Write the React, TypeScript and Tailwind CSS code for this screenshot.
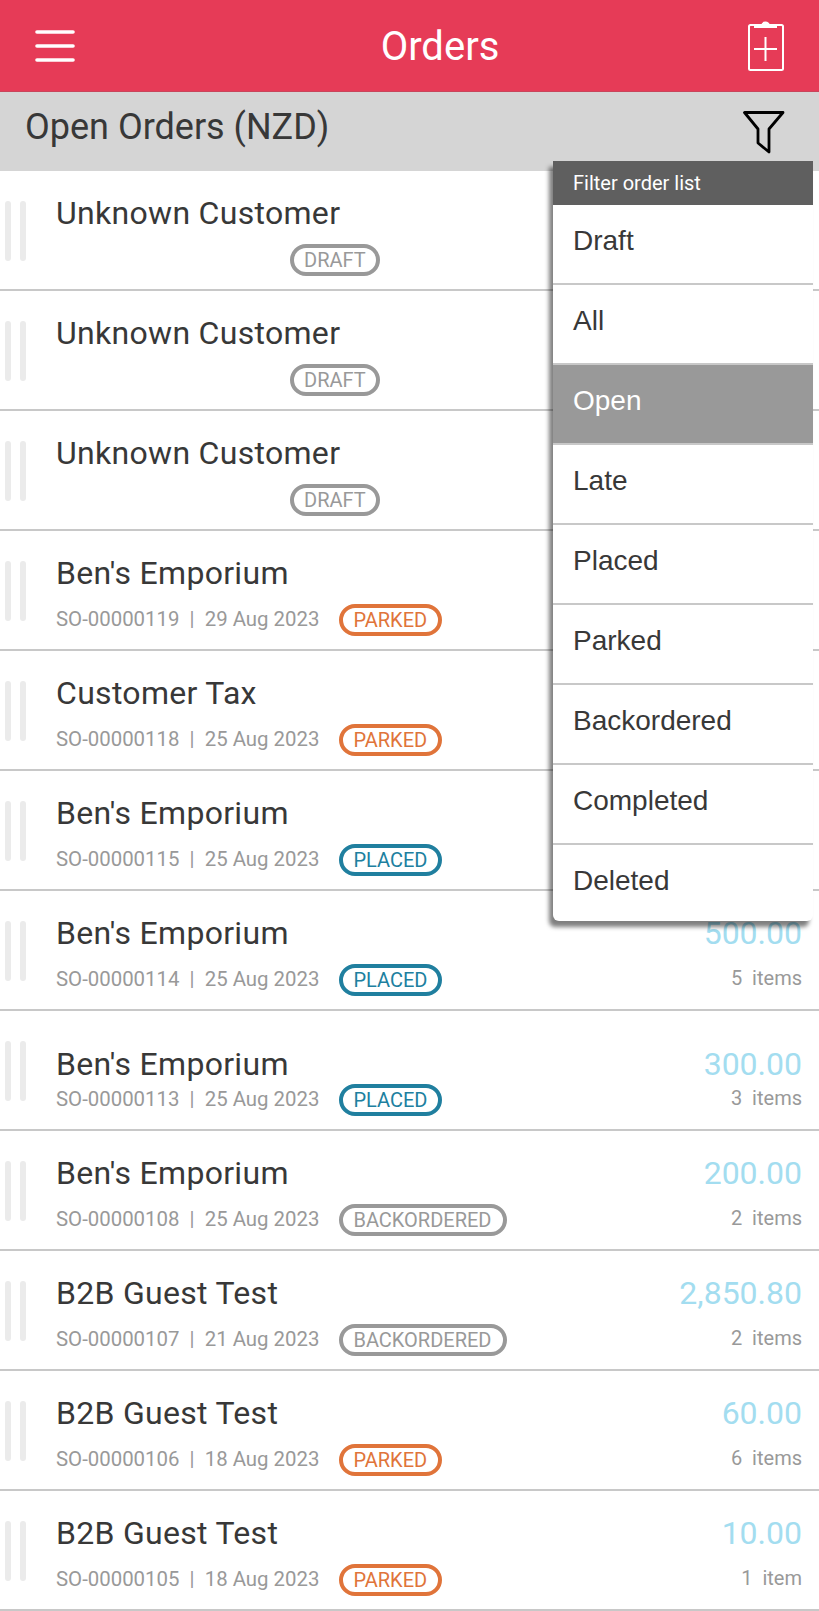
const FONT = "font-['Roboto',sans-serif]";

type Status = "DRAFT" | "PARKED" | "PLACED" | "BACKORDERED";

type Order = {
  name: string;
  so?: string;
  date?: string;
  status: Status;
  amount?: string;
  items?: string;
  shifted?: boolean;
};

const orders: Order[] = [
  { name: "Unknown Customer", status: "DRAFT" },
  { name: "Unknown Customer", status: "DRAFT" },
  { name: "Unknown Customer", status: "DRAFT" },
  { name: "Ben's Emporium", so: "SO-00000119", date: "29 Aug 2023", status: "PARKED" },
  { name: "Customer Tax", so: "SO-00000118", date: "25 Aug 2023", status: "PARKED" },
  { name: "Ben's Emporium", so: "SO-00000115", date: "25 Aug 2023", status: "PLACED" },
  { name: "Ben's Emporium", so: "SO-00000114", date: "25 Aug 2023", status: "PLACED", amount: "500.00", items: "5\u00a0\u00a0items" },
  { name: "Ben's Emporium", so: "SO-00000113", date: "25 Aug 2023", status: "PLACED", amount: "300.00", items: "3\u00a0\u00a0items", shifted: true },
  { name: "Ben's Emporium", so: "SO-00000108", date: "25 Aug 2023", status: "BACKORDERED", amount: "200.00", items: "2\u00a0\u00a0items" },
  { name: "B2B Guest Test", so: "SO-00000107", date: "21 Aug 2023", status: "BACKORDERED", amount: "2,850.80", items: "2\u00a0\u00a0items" },
  { name: "B2B Guest Test", so: "SO-00000106", date: "18 Aug 2023", status: "PARKED", amount: "60.00", items: "6\u00a0\u00a0items" },
  { name: "B2B Guest Test", so: "SO-00000105", date: "18 Aug 2023", status: "PARKED", amount: "10.00", items: "1\u00a0\u00a0item" },
];

const filters = ["Draft", "All", "Open", "Late", "Placed", "Parked", "Backordered", "Completed", "Deleted"];

const badgeStyles: Record<Status, string> = {
  DRAFT: "border-[#999999] text-[#999999] pr-[10px]",
  BACKORDERED: "border-[#999999] text-[#999999] pr-[11px]",
  PARKED: "border-[#E0743A] text-[#E0743A] pr-[11px]",
  PLACED: "border-[#207F9F] text-[#207F9F] pr-[11px]",
};

function Badge({ status, className = "" }: { status: Status; className?: string }) {
  return (
    <span
      className={`flex h-[32px] items-center rounded-full border-[4px] pl-[10px] text-[20px] leading-none ${badgeStyles[status]} ${className}`}
    >
      {status}
    </span>
  );
}

function OrderRow({ order }: { order: Order }) {
  return (
    <div className="flex h-[120px] border-b-2 border-[#C8C8C8] bg-white">
      <div className="flex w-[56px] shrink-0 gap-[9px] pl-[5px] pt-[30px]">
        <div className="h-[60px] w-[6px] rounded-full bg-[#EBEBEB]" />
        <div className="h-[60px] w-[6px] rounded-full bg-[#EBEBEB]" />
      </div>
      <div className={`flex-1 ${order.shifted ? "pt-[35px]" : "pt-[24px]"}`}>
        <div className="h-[36px] text-[32px] leading-[36px] tracking-[0.3px] text-[#383838]">{order.name}</div>
        <div className={`flex h-[32px] items-center ${order.shifted ? "mt-[2px]" : "mt-[13px]"}`}>
          {order.so ? (
            <>
              <span className="-mt-[2px] text-[20.4px] leading-none text-[#999999]">
                {order.so}
                {"\u00a0\u00a0|\u00a0\u00a0"}
                {order.date}
              </span>
              <Badge status={order.status} className="ml-[20px]" />
            </>
          ) : (
            <Badge status={order.status} className="ml-[234px]" />
          )}
        </div>
      </div>
      {order.amount && (
        <div className={`pr-[17px] text-right ${order.shifted ? "pt-[35px]" : "pt-[24px]"}`}>
          <div className="h-[36px] text-[32px] leading-[36px] text-[#A3DDF0]">{order.amount}</div>
          <div className={`text-[20px] leading-[32px] text-[#999999] ${order.shifted ? "mt-[0px]" : "mt-[11px]"}`}>
            {order.items}
          </div>
        </div>
      )}
    </div>
  );
}

function FilterMenu() {
  return (
    <div className="absolute left-[553px] top-[161px] w-[260px] overflow-hidden rounded-b-[6px] bg-white shadow-[-4px_6px_4px_rgba(0,0,0,0.5)]">
      <div className="flex h-[44px] items-center bg-[#5F5F5F] pl-[20px] text-[20px] text-white">Filter order list</div>
      {filters.map((filter, i) => (
        <div
          key={filter}
          className={`flex items-center pl-[20px] font-['Liberation_Sans',sans-serif] text-[28px] ${
            i < filters.length - 1 ? "h-[80px] border-b-2 border-[#C8C8C8] pb-[6px]" : "h-[76px] pb-[4px]"
          } ${filter === "Open" ? "bg-[#999999] text-white" : "text-[#383838]"}`}
        >
          {filter}
        </div>
      ))}
    </div>
  );
}

export default function App() {
  return (
    <div className={`relative h-[1611px] w-[819px] overflow-hidden bg-white ${FONT}`}>
      <header className="flex h-[92px] items-center border-b border-[#C9455B] bg-[#E63B57] pl-[35px] pr-[35px]">
        <svg width="40" height="36" viewBox="0 0 40 36" className="mt-[2px] shrink-0">
          <g stroke="#ffffff" strokeWidth="3.6" strokeLinecap="round">
            <line x1="2" y1="3" x2="38" y2="3" />
            <line x1="2" y1="17" x2="38" y2="17" />
            <line x1="2" y1="31" x2="38" y2="31" />
          </g>
        </svg>
        <div className="flex-1 pl-[57px] pt-[3px] text-center text-[40px] text-white">Orders</div>
        <svg width="36" height="50" viewBox="0 0 36 50" className="shrink-0">
          <rect x="1" y="4" width="34" height="45" rx="1.5" fill="none" stroke="#ffffff" strokeWidth="2" />
          <path d="M6 7 V4 H13 Q14 0.5 17.5 0.5 Q21 0.5 22 4 H29 V7 Z" fill="#ffffff" />
          <path d="M17.5 16 V40 M6 28 H29" stroke="#ffffff" strokeWidth="2" fill="none" />
        </svg>
      </header>
      <div className="flex h-[79px] items-start justify-between bg-[#D5D5D5] pl-[25px] pr-[34px]">
        <div className="pt-[15px] text-[36px] leading-[40px] text-[#383838]">Open Orders (NZD)</div>
        <svg width="42" height="44" viewBox="0 0 42 44" className="mt-[18px] shrink-0">
          <path
            d="M1.5 2.5 H40 L26 19 V42 L15 33 V19 Z"
            fill="none"
            stroke="#000000"
            strokeWidth="2.8"
            strokeLinejoin="round"
          />
        </svg>
      </div>
      {orders.map((order, i) => (
        <OrderRow key={i} order={order} />
      ))}
      <FilterMenu />
    </div>
  );
}
